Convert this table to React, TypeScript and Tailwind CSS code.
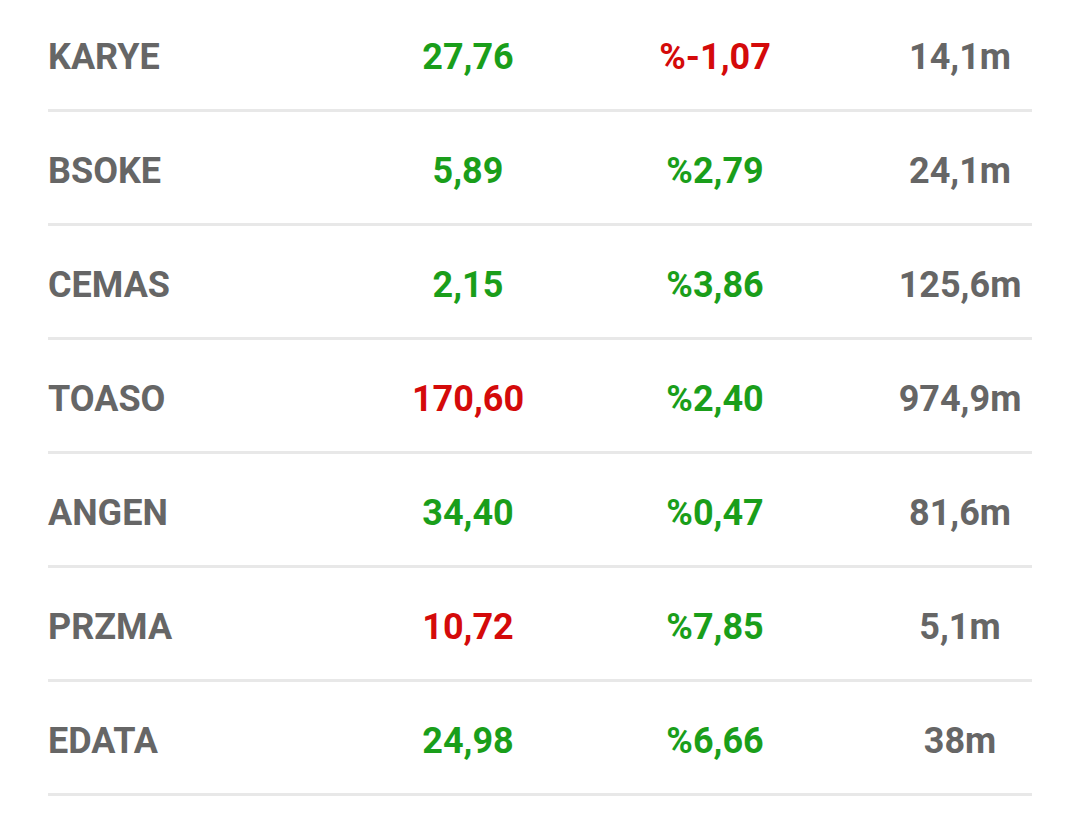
import { FC } from 'react';

interface Quote {
  symbol: string;
  price: string;
  priceUp: boolean;
  change: string;
  changeUp: boolean;
  volume: string;
}

const quotes: Quote[] = [
  { symbol: 'KARYE', price: '27,76', priceUp: true, change: '%-1,07', changeUp: false, volume: '14,1m' },
  { symbol: 'BSOKE', price: '5,89', priceUp: true, change: '%2,79', changeUp: true, volume: '24,1m' },
  { symbol: 'CEMAS', price: '2,15', priceUp: true, change: '%3,86', changeUp: true, volume: '125,6m' },
  { symbol: 'TOASO', price: '170,60', priceUp: false, change: '%2,40', changeUp: true, volume: '974,9m' },
  { symbol: 'ANGEN', price: '34,40', priceUp: true, change: '%0,47', changeUp: true, volume: '81,6m' },
  { symbol: 'PRZMA', price: '10,72', priceUp: false, change: '%7,85', changeUp: true, volume: '5,1m' },
  { symbol: 'EDATA', price: '24,98', priceUp: true, change: '%6,66', changeUp: true, volume: '38m' },
];

const QuoteRow: FC<{ quote: Quote }> = ({ quote }) => (
  <div className="grid grid-cols-[320px_200px_247px_1fr] items-center h-[114px] pt-[7px] border-b-[3px] border-[#e8e8e8]">
    <span className="text-[#666666]">{quote.symbol}</span>
    <span className={`text-center ${quote.priceUp ? 'text-[#1a9e1a]' : 'text-[#d40a0a]'}`}>
      {quote.price}
    </span>
    <span className={`text-center pl-[47px] ${quote.changeUp ? 'text-[#1a9e1a]' : 'text-[#d40a0a]'}`}>
      {quote.change}
    </span>
    <span className="text-center pl-[73px] text-[#666666]">{quote.volume}</span>
  </div>
);

const App: FC = () => {
  return (
    <div className="w-[1080px] h-[831px] bg-white overflow-hidden">
      <div className="ml-[48px] w-[984px] -mt-[2px] font-['Roboto',sans-serif] font-bold text-[36px] leading-none">
        {quotes.map((q) => (
          <QuoteRow key={q.symbol} quote={q} />
        ))}
      </div>
    </div>
  );
};

export default App;
